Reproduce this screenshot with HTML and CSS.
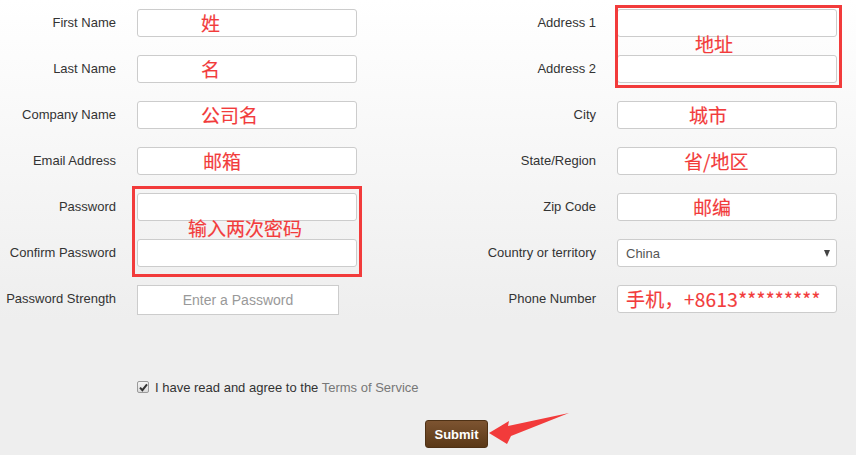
FILE: index.html
```html
<!DOCTYPE html>
<html lang="en">
<head>
<meta charset="utf-8">
<title>Register</title>
<link rel="stylesheet" href="styles.css">
</head>
<body>
<div class="page">
  <div class="cols">
    <div class="col">
      <label class="lbl">First Name</label>
      <div class="input"><span class="note n-first">姓</span></div>
      <label class="lbl">Last Name</label>
      <div class="input"><span class="note n-first">名</span></div>
      <label class="lbl">Company Name</label>
      <div class="input"><span class="note n-first">公司名</span></div>
      <label class="lbl">Email Address</label>
      <div class="input"><span class="note n-email">邮箱</span></div>
      <label class="lbl">Password</label>
      <div class="input"></div>
      <label class="lbl">Confirm Password</label>
      <div class="input"></div>
      <label class="lbl">Password Strength</label>
      <div class="strength">Enter a Password</div>
    </div>
    <div class="col">
      <label class="lbl">Address 1</label>
      <div class="input"></div>
      <label class="lbl">Address 2</label>
      <div class="input"></div>
      <label class="lbl">City</label>
      <div class="input"><span class="note n-city">城市</span></div>
      <label class="lbl">State/Region</label>
      <div class="input"><span class="note n-state">省/地区</span></div>
      <label class="lbl">Zip Code</label>
      <div class="input"><span class="note n-zip">邮编</span></div>
      <label class="lbl">Country or territory</label>
      <div class="input select"><span class="sel-val">China</span><span class="caret"></span></div>
      <label class="lbl">Phone Number</label>
      <div class="input"><span class="note n-phone">手机，+8613*********</span></div>
    </div>
  </div>

  <div class="agree">
    <span class="checkbox">
      <svg width="9" height="9" viewBox="0 0 9 9"><path d="M1 4.6 L3.4 7.2 L8 1.4" fill="none" stroke="#333" stroke-width="2"/></svg>
    </span>
    <span>I have read and agree to the <a class="terms">Terms of Service</a></span>
  </div>

  <div class="actions">
    <button class="submit">Submit</button>
  </div>

  <div class="annot box-pass"></div>
  <div class="annot-text t-pass">输入两次密码</div>
  <div class="annot box-addr"></div>
  <div class="annot-text t-addr">地址</div>
  <svg class="arrow" width="90" height="40" viewBox="0 0 90 40">
    <polygon points="1,21 21,9 20,14 81,1 23,24 19,32" fill="#f23b3b"/>
  </svg>
</div>
</body>
</html>
```
FILE: styles.css
```css
html, body {
  margin: 0;
  padding: 0;
}
body {
  font-family: "Liberation Sans", Arial, sans-serif;
  font-size: 13px;
  color: #333;
  background: linear-gradient(to bottom, #ffffff 0, #eeeeee 320px, #eeeeee 100%);
  min-height: 455px;
}
.page {
  position: relative;
  height: 455px;
  padding-top: 9px;
  box-sizing: border-box;
}
.cols {
  display: flex;
  gap: 123px;
}
.col {
  display: grid;
  grid-template-columns: 116px 220px;
  grid-auto-rows: 28px;
  column-gap: 21px;
  row-gap: 18px;
  align-items: center;
}
.lbl {
  text-align: right;
  white-space: nowrap;
  color: #333;
  line-height: 15px;
  margin-top: -2px;
}
.input {
  height: 28px;
  box-sizing: border-box;
  background: #fff;
  border: 1px solid #cccccc;
  border-radius: 3px;
  display: flex;
  align-items: center;
  overflow: hidden;
}
.note {
  color: #f23b3b;
  font-family: "Noto Sans CJK SC", "Microsoft YaHei", sans-serif;
  font-size: 19px;
  font-weight: 400;
  -webkit-text-stroke: 0.15px #f23b3b;
  line-height: 24px;
  white-space: nowrap;
}
.n-first { margin-left: 63px; }
.n-email { margin-left: 65px; }
.n-city { margin-left: 71px; }
.n-state { margin-left: 66px; }
.n-zip { margin-left: 75px; }
.n-phone { margin-left: 8px; letter-spacing: 0.3px; }
.strength {
  width: 202px;
  height: 30px;
  align-self: start;
  box-sizing: border-box;
  border: 1px solid #cccccc;
  background: #fff;
  color: #999;
  font-size: 14px;
  display: flex;
  align-items: center;
  justify-content: center;
}
.select {
  justify-content: space-between;
  padding: 0 8px;
}
.sel-val {
  color: #555;
  font-size: 13px;
}
.caret {
  width: 0;
  height: 0;
  border-left: 3.5px solid transparent;
  border-right: 3.5px solid transparent;
  border-top: 7px solid #444;
  margin-right: -2px;
}
.agree {
  display: flex;
  align-items: center;
  gap: 6px;
  margin-top: 66px;
  padding-left: 137px;
  height: 16px;
}
.checkbox {
  width: 12px;
  height: 12px;
  box-sizing: border-box;
  border: 1px solid #9a9a9a;
  border-radius: 2px;
  background: linear-gradient(#f4f4f4, #dcdcdc);
  display: flex;
  align-items: center;
  justify-content: center;
}
.terms {
  color: #777;
}
.actions {
  margin-top: 25px;
  padding-left: 425px;
}
.submit {
  width: 63px;
  height: 28px;
  border: 1px solid #4e3115;
  border-radius: 3px;
  background: linear-gradient(#7d5431, #5a3817);
  color: #fff;
  font-family: "Liberation Sans", Arial, sans-serif;
  font-size: 13px;
  font-weight: bold;
  padding: 0;
}
.annot {
  position: absolute;
  border: 3px solid #f23b3b;
  box-sizing: border-box;
}
.box-pass {
  left: 132px;
  top: 186px;
  width: 230px;
  height: 91px;
}
.box-addr {
  left: 615px;
  top: 5px;
  width: 227px;
  height: 83px;
}
.annot-text {
  position: absolute;
  color: #f23b3b;
  font-family: "Noto Sans CJK SC", "Microsoft YaHei", sans-serif;
  font-size: 19px;
  font-weight: 400;
  -webkit-text-stroke: 0.15px #f23b3b;
  line-height: 19px;
  white-space: nowrap;
}
.t-pass {
  left: 188px;
  top: 218px;
}
.t-addr {
  left: 695px;
  top: 34px;
}
.arrow {
  position: absolute;
  left: 488px;
  top: 412px;
}
```
